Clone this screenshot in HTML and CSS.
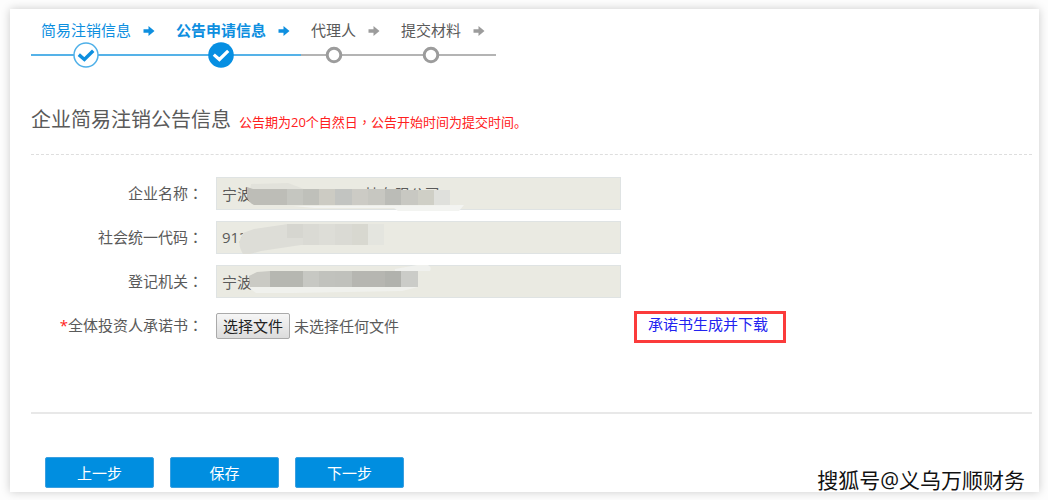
FILE: index.html
```html
<!DOCTYPE html>
<html lang="zh-CN">
<head>
<meta charset="utf-8">
<meta name="viewport" content="width=device-width, initial-scale=1">
<title>企业简易注销公告信息</title>
<link rel="stylesheet" href="styles.css">
</head>
<body>
<svg class="defs" aria-hidden="true">
  <symbol id="arrow" viewBox="0 0 12 12"><path d="M0.5 4.3h5V1L11.5 6l-6 5V7.7h-5z" fill="currentColor"/></symbol>
</svg>
<main class="card">
  <ol class="steps">
    <li class="step step-done">
      <span class="step-name">简易注销信息</span>
      <svg class="step-arrow"><use href="#arrow"/></svg>
      <span class="step-line"></span>
      <svg class="step-mark" viewBox="0 0 26 26"><circle cx="13" cy="13" r="12" fill="#fff" stroke="#4fb0e8" stroke-width="1.5"/><path d="M5.8 12.6l5.6 4.9 8.8-8.7" fill="none" stroke="#0e8fdf" stroke-width="3.4"/></svg>
    </li>
    <li class="step step-done step-current" aria-current="step">
      <span class="step-name">公告申请信息</span>
      <svg class="step-arrow"><use href="#arrow"/></svg>
      <span class="step-line"></span>
      <svg class="step-mark" viewBox="0 0 26 26"><circle cx="13" cy="13" r="12.8" fill="#068fe2"/><path d="M5.8 12.6l5.6 4.9 8.8-8.7" fill="none" stroke="#fff" stroke-width="3.2"/></svg>
    </li>
    <li class="step">
      <span class="step-name">代理人</span>
      <svg class="step-arrow"><use href="#arrow"/></svg>
      <span class="step-line"></span>
      <svg class="step-mark" viewBox="0 0 26 26"><circle cx="13" cy="13" r="6.8" fill="#fff" stroke="#9c9c9c" stroke-width="3"/></svg>
    </li>
    <li class="step">
      <span class="step-name">提交材料</span>
      <svg class="step-arrow"><use href="#arrow"/></svg>
      <span class="step-line"></span>
      <svg class="step-mark" viewBox="0 0 26 26"><circle cx="13" cy="13" r="6.8" fill="#fff" stroke="#9c9c9c" stroke-width="3"/></svg>
    </li>
  </ol>

  <header class="heading">
    <h1 class="title">企业简易注销公告信息</h1>
    <p class="notice">公告期为20个自然日<span class="centered-mark" lang="zh-TW">，</span>公告开始时间为提交时间。</p>
  </header>

  <form class="form">
    <div class="row">
      <label class="label" for="company">企业名称<span class="centered-mark" lang="zh-TW">：</span></label>
      <div class="field">
        <input class="input" id="company" type="text" readonly value="宁波　　　　　　　  技有限公司">
        <svg class="mask" viewBox="216 177 405 40" aria-hidden="true">
          <path d="M251 184l37-1 16 6h-54z" fill="#e2e2db"/>
          <path d="M247 187l6 2h34v16h-33q-5-2-7-8z" fill="#bdbdb7"/>
          <path d="M287 189h16v16h-16z" fill="#c5c6c0"/>
          <path d="M303 189h16v16h-16z" fill="#bfc0ba"/>
          <path d="M319 189h16v16h-16z" fill="#cccbc3"/>
          <path d="M335 189h17v16h-17z" fill="#c2c4c1"/>
          <path d="M352 189h16v16h-16z" fill="#cccbc5"/>
          <path d="M368 189h17v16h-17z" fill="#c7c7c1"/>
          <path d="M385 189h16v16h-16z" fill="#bbbcb7"/>
          <path d="M401 190h17v15h-17z" fill="#c8c8c2"/>
          <path d="M418 190h16v15h-16z" fill="#cfcfc6"/>
          <path d="M434 190h16v15h-16z" fill="#dfe0dc"/>
          <path d="M294 206l170-1-5 6h-61l-4-3h-80z" fill="#f3f4f1"/>
        </svg>
      </div>
    </div>
    <div class="row">
      <label class="label" for="code">社会统一代码<span class="centered-mark" lang="zh-TW">：</span></label>
      <div class="field">
        <input class="input" id="code" type="text" readonly value="913">
        <svg class="mask" viewBox="216 221 405 40" aria-hidden="true">
          <path d="M243 233l11-4 34-5h64v21h-51l-40 6-11 3h-7q-5-8-3-14z" fill="#ddddd7"/>
          <path d="M287 224h16v14h-16z" fill="#d6d6d0"/>
          <path d="M303 224h16v21h-16zM335 224h17v21h-17z" fill="#dadad4"/>
          <path d="M352 224h16v21h-16z" fill="#d8d8d0"/>
          <path d="M368 224h16v21h-16z" fill="#e4e5df"/>
        </svg>
      </div>
    </div>
    <div class="row">
      <label class="label" for="authority">登记机关<span class="centered-mark" lang="zh-TW">：</span></label>
      <div class="field">
        <input class="input" id="authority" type="text" readonly value="宁波">
        <svg class="mask" viewBox="216 265 405 40" aria-hidden="true">
          <path d="M248 287h170l-16 4-110 2h-36z" fill="#f0f1ed"/>
          <path d="M395 269l22-4h11q4 2 2 6h-35z" fill="#f0f1ee"/>
          <path d="M249 276l8-4 13-1v16h-20z" fill="#cacac4"/>
          <path d="M270 271h33v16h-33z" fill="#b6b7b1"/>
          <path d="M303 271h16v16h-16z" fill="#c7c8c3"/>
          <path d="M319 271h16v16h-16z" fill="#c1c2bd"/>
          <path d="M335 271h17v16h-17z" fill="#c0c1bc"/>
          <path d="M352 271h33v16h-33z" fill="#b6b6b1"/>
          <path d="M385 271h16v16h-16z" fill="#b1b2ad"/>
          <path d="M401 271h17v16h-17z" fill="#cbccc8"/>
        </svg>
      </div>
    </div>
    <div class="row">
      <label class="label" for="pick"><span class="required">*</span>全体投资人承诺书<span class="centered-mark" lang="zh-TW">：</span></label>
      <div class="upload">
        <button class="pick" id="pick" type="button" onclick="document.getElementById('file').click()">选择文件</button>
        <span>未选择任何文件</span>
        <input id="file" type="file" hidden>
      </div>
      <a class="download" href="#">承诺书生成并下载</a>
    </div>
  </form>

  <footer class="actions">
    <button class="action" type="button">上一步</button>
    <button class="action" type="button">保存</button>
    <button class="action" type="button">下一步</button>
  </footer>
  <span class="watermark">搜狐号@义乌万顺财务</span>
</main>
</body>
</html>
```
FILE: styles.css
```css
* {
  box-sizing: border-box;
}

body {
  margin: 0;
  padding: 9px 9px 9px 10px;
  background: #fdfdfd;
  color: #5a5a5a;
  font-family: "Open Sans", "Noto Sans CJK SC", sans-serif;
  font-size: 15px;
  line-height: 20px;
}

button,
input {
  font: inherit;
}

.defs {
  display: none;
}

.card {
  position: relative;
  padding: 9px 7px 4px 21px;
  background: #fff;
  box-shadow: 0 0 9px rgba(0, 0, 0, 0.2);
}

/* Progress steps */
.steps {
  display: flex;
  margin: 0;
  padding: 0;
  list-style: none;
}

.step {
  display: grid;
  grid-template-columns: 10px auto 35px;
  grid-template-rows: 24px 26px;
  align-items: center;
  color: #9c9c9c;
}

.step-name {
  grid-column: 2;
  color: #5a5a5a;
}

.step-arrow {
  grid-column: 3;
  width: 12px;
  height: 12px;
  margin: 2px 0 0 12px;
}

.step-line {
  grid-area: 2 / 1 / 3 / 4;
  height: 2px;
  background: #b4b4b4;
}

.step-mark {
  grid-area: 2 / 2;
  justify-self: center;
  width: 26px;
  height: 26px;
}

.step-done,
.step-done .step-name {
  color: #0e8fdf;
}

.step-done .step-line {
  background: #55b2e8;
}

.step-current .step-name {
  font-weight: 700;
}

/* Page heading */
.heading {
  display: flex;
  align-items: baseline;
  gap: 8px;
  margin-top: 37px;
  padding-bottom: 19px;
  border-bottom: 1px dashed #dedede;
}

.title {
  margin: 0;
  font-size: 20px;
  font-weight: 400;
  line-height: 30px;
}

.notice {
  margin: 0;
  color: #ff2020;
  font-size: 13px;
}

.centered-mark {
  font-family: "Noto Sans CJK TC", sans-serif;
}

/* Form */
.form {
  display: flex;
  flex-direction: column;
  gap: 11px;
  padding: 22px 0 69px;
  border-bottom: 2px solid #e8e8e8;
}

.row {
  display: grid;
  grid-template-columns: 172px minmax(0, 405px) auto;
  justify-content: start;
  align-items: center;
  column-gap: 13px;
}

.label {
  padding-bottom: 2px;
  text-align: right;
  white-space: nowrap;
}

.required {
  color: #ff2020;
}

.field {
  position: relative;
}

.input {
  display: block;
  width: 100%;
  height: 33px;
  padding: 0 5px 1px;
  border: 1px solid #dfe3e3;
  background: #eaeae2;
  color: #5a5a5a;
}

.mask {
  position: absolute;
  top: 0;
  left: 0;
  width: 405px;
  height: 40px;
}

.upload {
  display: flex;
  align-items: center;
  gap: 4px;
}

.pick {
  height: 26px;
  padding: 0 6px;
  border: 1px solid #aaa;
  border-radius: 2px;
  background: linear-gradient(#f6f6f6, #dcdcdc);
  color: #222;
  line-height: 22px;
}

.download {
  margin-top: 2px;
  padding: 2px 15px 8px 11px;
  border: 3px solid #fb3b3b;
  color: #2222f0;
  line-height: 16px;
  text-decoration: none;
}

/* Bottom actions */
.actions {
  display: flex;
  gap: 16px;
  padding: 43px 14px 0;
}

.action {
  width: 109px;
  height: 31px;
  padding: 0;
  border: 1px solid #3a9fe0;
  border-radius: 2px;
  background: #008ee0;
  color: #fff;
}

.watermark {
  position: absolute;
  right: 14px;
  bottom: 0;
  color: #111;
  font-size: 21px;
  line-height: 24px;
  text-shadow: 1px 1px 0 #fff, -1px -1px 0 #fff;
}
```
